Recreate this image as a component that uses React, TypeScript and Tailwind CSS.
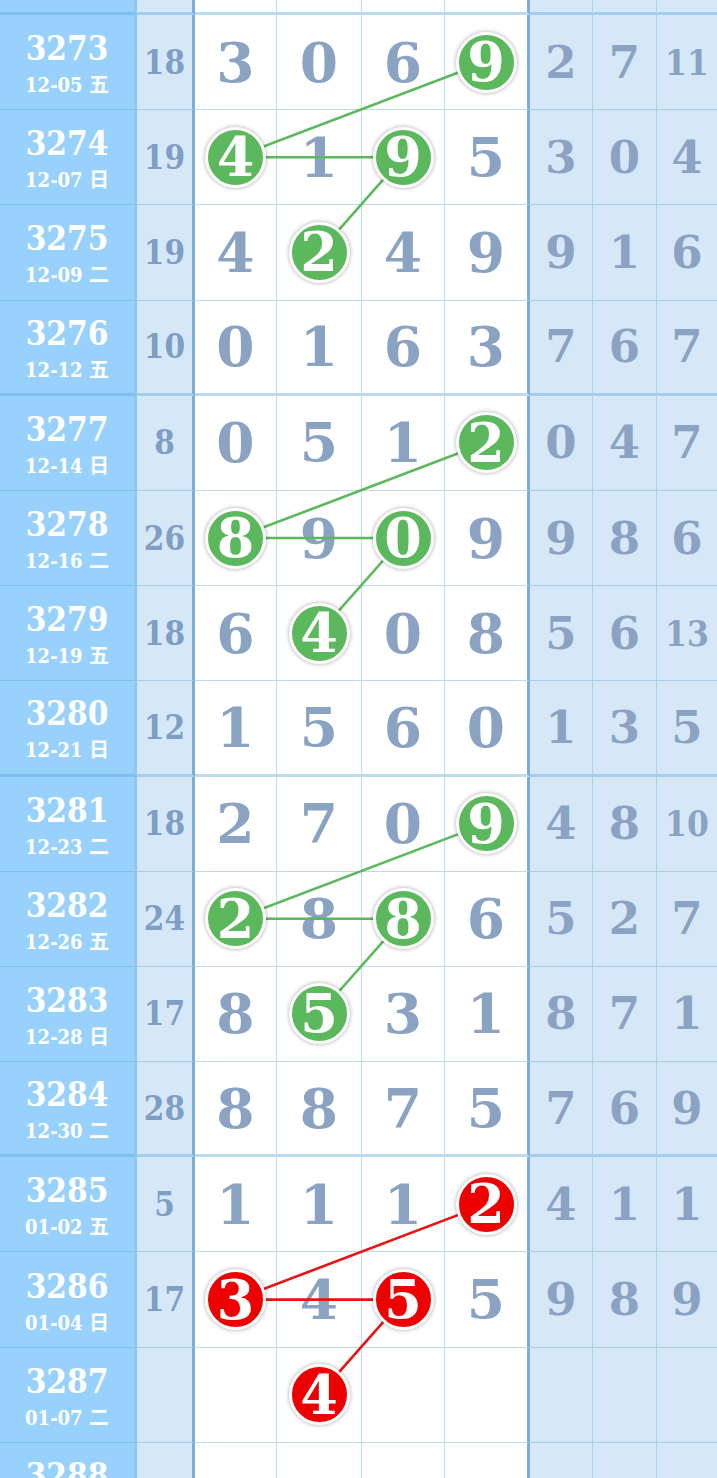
type Row = { n: string; d: string; s: string; m: (number | null)[]; r: (number | null)[] };

const rows: Row[] = [
  { n: "3273", d: "12-05 五", s: "18", m: [3, 0, 6, 9], r: [2, 7, 11] },
  { n: "3274", d: "12-07 日", s: "19", m: [4, 1, 9, 5], r: [3, 0, 4] },
  { n: "3275", d: "12-09 二", s: "19", m: [4, 2, 4, 9], r: [9, 1, 6] },
  { n: "3276", d: "12-12 五", s: "10", m: [0, 1, 6, 3], r: [7, 6, 7] },
  { n: "3277", d: "12-14 日", s: "8", m: [0, 5, 1, 2], r: [0, 4, 7] },
  { n: "3278", d: "12-16 二", s: "26", m: [8, 9, 0, 9], r: [9, 8, 6] },
  { n: "3279", d: "12-19 五", s: "18", m: [6, 4, 0, 8], r: [5, 6, 13] },
  { n: "3280", d: "12-21 日", s: "12", m: [1, 5, 6, 0], r: [1, 3, 5] },
  { n: "3281", d: "12-23 二", s: "18", m: [2, 7, 0, 9], r: [4, 8, 10] },
  { n: "3282", d: "12-26 五", s: "24", m: [2, 8, 8, 6], r: [5, 2, 7] },
  { n: "3283", d: "12-28 日", s: "17", m: [8, 5, 3, 1], r: [8, 7, 1] },
  { n: "3284", d: "12-30 二", s: "28", m: [8, 8, 7, 5], r: [7, 6, 9] },
  { n: "3285", d: "01-02 五", s: "5", m: [1, 1, 1, 2], r: [4, 1, 1] },
  { n: "3286", d: "01-04 日", s: "17", m: [3, 4, 5, 5], r: [9, 8, 9] },
  { n: "3287", d: "01-07 二", s: "", m: [null, 4, null, null], r: [null, null, null] },
  { n: "3288", d: "01-09 四", s: "", m: [null, null, null, null], r: [null, null, null] },
];

// circled cells: [row, col]
const groupHits = (g: number): [number, number][] => [
  [g * 4, 3],
  [g * 4 + 1, 0],
  [g * 4 + 1, 2],
  [g * 4 + 2, 1],
];
const hits = new Set<string>();
for (let g = 0; g < 4; g++) groupHits(g).forEach(([r, c]) => hits.add(`${r}-${c}`));

const TOP = 15;
const RH = 95.2;
const colX = [235.5, 319, 403, 486];
const rowY = (i: number) => TOP + i * RH + 47;

const serif = "font-['DejaVu_Serif','Noto_Sans_CJK_SC',serif] font-bold";
const narrow = "font-['DejaVu_Serif_Condensed','DejaVu_Serif','Noto_Sans_CJK_SC',serif] font-bold [font-stretch:condensed]";
const line = "border-b-[rgba(88,165,215,0.4)]";

const mainW = ["w-[82px]", "w-[85px]", "w-[83px]", "w-[85px]"];

function Ball({ v, red }: { v: number; red: boolean }) {
  return (
    <div
      className={`relative z-10 flex h-[61px] w-[61px] items-center justify-center rounded-full border-[3px] border-white shadow-[0_0_4px_rgba(0,0,0,0.35)] ${
        red ? "bg-[#ee0000]" : "bg-[#5cb85c]"
      }`}
    >
      <span className={`${serif} text-[54px] leading-none text-white`}>{v}</span>
    </div>
  );
}

function TableRow({ row, i }: { row: Row; i: number }) {
  const b = i % 4 === 3 ? "border-b-[3px]" : "border-b";
  return (
    <div className="flex h-[95.2px]">
      <div className={`flex w-[137px] flex-col items-center justify-center gap-[10px] border-r-[3px] border-r-[#8cc8f2] bg-[#99d1fd] pt-[3px] ${b} ${line} text-white ${narrow}`}>
        <div className="text-[33px] leading-none">{row.n}</div>
        <div className="text-[20px] leading-none">{row.d}</div>
      </div>
      <div className={`flex w-[58px] items-center justify-center border-r-[3px] border-r-[#79aed5] bg-[#d6e8f8] ${b} ${line}`}>
        <span className={`${narrow} text-[33px] leading-none text-[#7e9ec3]`}>{row.s}</span>
      </div>
      {row.m.map((v, c) => {
        const hit = hits.has(`${i}-${c}`);
        const val = hit ? (row.m[c] ?? (i === 14 ? 4 : 0)) : v;
        return (
          <div
            key={c}
            className={`flex ${mainW[c]} items-center justify-center bg-white ${b} ${line} ${
              c === 3 ? "border-r-[3px] border-r-[#79aed5]" : "border-r border-r-[#bcdcef]"
            }`}
          >
            {hit ? (
              <Ball v={val as number} red={i >= 12} />
            ) : (
              v !== null && <span className={`${serif} text-[55px] leading-none text-[#8aa3c3]`}>{v}</span>
            )}
          </div>
        );
      })}
      {row.r.map((v, c) => (
        <div
          key={c}
          className={`flex items-center justify-center bg-[#d6e8f8] ${b} ${line} ${
            c === 0 ? "w-[63px] border-r border-r-[#a9d2ec]" : c === 1 ? "w-[64px] border-r border-r-[#a9d2ec]" : "flex-1"
          }`}
        >
          {v !== null && (
            <span className={`leading-none text-[#8ba3c3] ${v > 9 ? `${narrow} text-[35px]` : `${serif} text-[45px]`}`}>{v}</span>
          )}
        </div>
      ))}
    </div>
  );
}

function Links() {
  const segs: { x1: number; y1: number; x2: number; y2: number; red: boolean }[] = [];
  for (let g = 0; g < 4; g++) {
    const h = groupHits(g);
    for (let k = 0; k < 3; k++) {
      const [r1, c1] = h[k];
      const [r2, c2] = h[k + 1];
      segs.push({ x1: colX[c1], y1: rowY(r1), x2: colX[c2], y2: rowY(r2), red: g === 3 });
    }
  }
  return (
    <svg className="pointer-events-none absolute left-0 top-0 z-[5]" width={717} height={1560}>
      {segs.map((s, k) => (
        <line key={k} x1={s.x1} y1={s.y1} x2={s.x2} y2={s.y2} stroke={s.red ? "#ee1111" : "#5cb85c"} strokeWidth={2.6} />
      ))}
    </svg>
  );
}

export default function App() {
  return (
    <div className="relative h-[1478px] w-[717px] overflow-hidden bg-white">
      <div className="flex h-[15px]">
        <div className={`w-[137px] border-b-[3px] border-r-[3px] border-r-[#8cc8f2] bg-[#99d1fd] ${line}`} />
        <div className={`w-[58px] border-b-[3px] border-r-[3px] border-r-[#79aed5] bg-[#d6e8f8] ${line}`} />
        {mainW.map((w, c) => (
          <div
            key={c}
            className={`${w} border-b-[3px] bg-white ${line} ${c === 3 ? "border-r-[3px] border-r-[#79aed5]" : "border-r border-r-[#bcdcef]"}`}
          />
        ))}
        <div className={`w-[63px] border-b-[3px] border-r border-r-[#a9d2ec] bg-[#d6e8f8] ${line}`} />
        <div className={`w-[64px] border-b-[3px] border-r border-r-[#a9d2ec] bg-[#d6e8f8] ${line}`} />
        <div className={`flex-1 border-b-[3px] bg-[#d6e8f8] ${line}`} />
      </div>
      {rows.map((row, i) => (
        <TableRow key={row.n} row={row} i={i} />
      ))}
      <Links />
    </div>
  );
}
